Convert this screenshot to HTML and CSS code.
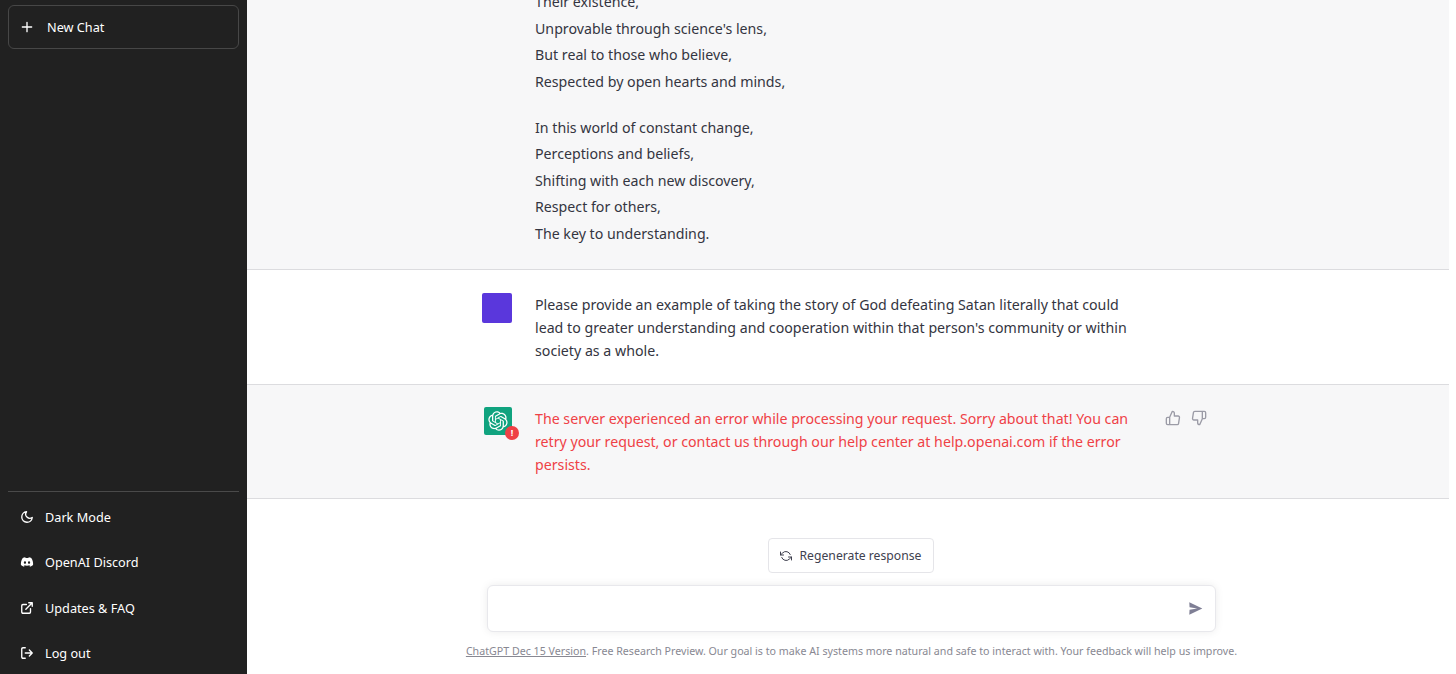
FILE: index.html
```html
<!DOCTYPE html>
<html lang="en">
<head>
  <meta charset="UTF-8" />
  <title>New chat</title>
  <link rel="stylesheet" href="styles.css">
</head>
<body>
  <aside class="sidebar">
    <a class="new-chat">
      <svg class="icon" viewBox="0 0 24 24"><path d="M12 4v16M4 12h16"/></svg>
      New Chat
    </a>
    <div class="side-bottom">
      <a class="side-link">
        <svg class="icon" viewBox="0 0 24 24"><path d="M21 12.79A9 9 0 1 1 11.21 3 7 7 0 0 0 21 12.79z"/></svg>
        Dark Mode
      </a>
      <a class="side-link">
        <svg class="icon" viewBox="0 0 24 24"><path class="fill" d="M19.3 5.3A17 17 0 0 0 15 4l-.6 1.2a16 16 0 0 0-4.800 0L9 4a17 17 0 0 0-4.300 1.300C2 9.400 1.200 13.400 1.600 17.300A17 17 0 0 0 6.900 20l1.100-1.800-1.700-.8.400-.3a12 12 0 0 0 10.600 0l.4.300-1.700.8 1.100 1.800a17 17 0 0 0 5.300-2.700c.5-4.500-.8-8.500-3.100-12zM8.500 15c-1 0-1.900-1-1.900-2.200s.8-2.200 1.900-2.200 1.900 1 1.900 2.200-.8 2.200-1.900 2.200zm7 0c-1 0-1.900-1-1.900-2.200s.8-2.200 1.900-2.200 1.900 1 1.900 2.200-.8 2.200-1.900 2.200z"/></svg>
        OpenAI Discord
      </a>
      <a class="side-link">
        <svg class="icon" viewBox="0 0 24 24"><path d="M18 13v6a2 2 0 0 1-2 2H5a2 2 0 0 1-2-2V8a2 2 0 0 1 2-2h6M15 3h6v6M10 14L21 3"/></svg>
        Updates &amp; FAQ
      </a>
      <a class="side-link">
        <svg class="icon" viewBox="0 0 24 24"><path d="M9 21H5a2 2 0 0 1-2-2V5a2 2 0 0 1 2-2h4M16 17l5-5-5-5M21 12H9"/></svg>
        Log out
      </a>
    </div>
  </aside>

  <main class="main">
    <section class="msg msg-grey msg-poem">
      <div class="msg-inner">
        <div class="avatar-space"></div>
        <div class="msg-text">
          <p>Their existence,<br>Unprovable through science's lens,<br>But real to those who believe,<br>Respected by open hearts and minds,</p>
          <p>In this world of constant change,<br>Perceptions and beliefs,<br>Shifting with each new discovery,<br>Respect for others,<br>The key to understanding.</p>
        </div>
      </div>
    </section>

    <section class="msg">
      <div class="msg-inner">
        <div class="avatar-space"><div class="avatar-user"></div></div>
        <div class="msg-text">Please provide an example of taking the story of God defeating Satan literally that could lead to greater understanding and cooperation within that person's community or within society as a whole.</div>
      </div>
    </section>

    <section class="msg msg-grey">
      <div class="msg-inner msg-inner-bot">
        <div class="avatar-space">
          <div class="avatar-bot">
            <svg viewBox="0 0 41 41"><path d="M37.5324 16.8707C37.9808 15.5241 38.1363 14.0974 37.9886 12.6859C37.8409 11.2744 37.3934 9.91076 36.676 8.68622C35.6126 6.83404 33.9882 5.3676 32.0373 4.4985C30.0864 3.62941 27.9098 3.40259 25.8215 3.85078C24.8796 2.7893 23.7219 1.94125 22.4257 1.36341C21.1295 0.785575 19.7249 0.491269 18.3058 0.500197C16.1708 0.495044 14.0893 1.16803 12.3614 2.42214C10.6335 3.67624 9.34853 5.44666 8.6917 7.47815C7.30085 7.76286 5.98686 8.3414 4.8377 9.17505C3.68854 10.0087 2.73073 11.0782 2.02839 12.312C0.956464 14.1591 0.498905 16.2988 0.721698 18.4228C0.944492 20.5467 1.83612 22.5449 3.268 24.1293C2.81966 25.4759 2.66413 26.9026 2.81182 28.3141C2.95951 29.7256 3.40701 31.0892 4.12437 32.3138C5.18791 34.1659 6.8123 35.6322 8.76321 36.5013C10.7141 37.3704 12.8907 37.5973 14.9789 37.1492C15.9208 38.2107 17.0786 39.0587 18.3747 39.6366C19.6709 40.2144 21.0755 40.5087 22.4946 40.4998C24.6307 40.5054 26.7133 39.8321 28.4418 38.5772C30.1704 37.3223 31.4556 35.5506 32.1119 33.5179C33.5027 33.2332 34.8167 32.6547 35.9659 31.821C37.115 30.9874 38.0728 29.9178 38.7752 28.684C39.8458 26.8371 40.3023 24.6979 40.0789 22.5748C39.8556 20.4517 38.9639 18.4544 37.5324 16.8707ZM22.4978 37.8849C20.7443 37.8874 19.0459 37.2733 17.6994 36.1501C17.7601 36.117 17.8666 36.0586 17.936 36.0161L25.9004 31.4156C26.1003 31.3019 26.2663 31.137 26.3813 30.9378C26.4964 30.7386 26.5563 30.5124 26.5549 30.2825V19.0542L29.9213 20.998C29.9389 21.0068 29.9541 21.0198 29.9656 21.0359C29.977 21.052 29.9842 21.0707 29.9867 21.0902V30.3889C29.9842 32.375 29.1946 34.2791 27.7909 35.6841C26.3872 37.0892 24.4838 37.8806 22.4978 37.8849ZM6.39227 31.0064C5.51397 29.4888 5.19742 27.7107 5.49804 25.9832C5.55718 26.0187 5.66048 26.0818 5.73461 26.1244L13.699 30.7248C13.8975 30.8408 14.1233 30.902 14.3532 30.902C14.583 30.902 14.8088 30.8408 15.0073 30.7248L24.731 25.1103V28.9979C24.7321 29.0177 24.7283 29.0376 24.7199 29.0556C24.7115 29.0736 24.6988 29.0893 24.6829 29.1012L16.6317 33.7497C14.9096 34.7416 12.8643 35.0097 10.9447 34.4954C9.02506 33.9811 7.38785 32.7263 6.39227 31.0064ZM4.29707 13.6194C5.17156 12.0998 6.55279 10.9364 8.19885 10.3327C8.19885 10.4013 8.19491 10.5228 8.19491 10.6071V19.808C8.19351 20.0378 8.25334 20.2638 8.36823 20.4629C8.48312 20.6619 8.64893 20.8267 8.84863 20.9404L18.5723 26.5542L15.206 28.4979C15.1894 28.5089 15.1703 28.5155 15.1505 28.5173C15.1307 28.5191 15.1107 28.516 15.0924 28.5082L7.04046 23.8557C5.32135 22.8601 4.06716 21.2235 3.55289 19.3046C3.03862 17.3858 3.30624 15.3413 4.29707 13.6194ZM31.955 20.0556L22.2312 14.4411L25.5976 12.4981C25.6142 12.4872 25.6333 12.4805 25.6531 12.4787C25.6729 12.4769 25.6928 12.4801 25.7111 12.4879L33.7631 17.1364C34.9967 17.849 36.0017 18.8982 36.6606 20.1613C37.3194 21.4244 37.6047 22.849 37.4832 24.2684C37.3617 25.6878 36.8382 27.0432 35.9743 28.1759C35.1103 29.3086 33.9415 30.1717 32.6047 30.6641C32.6047 30.5947 32.6047 30.4733 32.6047 30.3889V21.188C32.6066 20.9586 32.5474 20.7328 32.4332 20.5338C32.319 20.3348 32.154 20.1698 31.955 20.0556ZM35.3055 15.0128C35.2464 14.9765 35.1431 14.9142 35.069 14.8717L27.1045 10.2712C26.906 10.1554 26.6803 10.0943 26.4504 10.0943C26.2206 10.0943 25.9948 10.1554 25.7963 10.2712L16.0726 15.8858V11.9982C16.0715 11.9783 16.0753 11.9585 16.0837 11.9405C16.0921 11.9225 16.1048 11.9068 16.1207 11.8949L24.1719 7.25025C25.4053 6.53903 26.8158 6.19376 28.2383 6.25482C29.6608 6.31589 31.0364 6.78077 32.2044 7.59508C33.3723 8.40939 34.2842 9.53945 34.8334 10.8531C35.3826 12.1667 35.5464 13.6095 35.3055 15.0128ZM14.2424 21.9419L10.8752 19.9981C10.8576 19.9893 10.8423 19.9763 10.8309 19.9602C10.8195 19.9441 10.8122 19.9254 10.8098 19.9058V10.6071C10.8107 9.18295 11.2173 7.78848 11.9819 6.58696C12.7466 5.38544 13.8377 4.42659 15.1275 3.82264C16.4173 3.21869 17.8524 2.99464 19.2649 3.1767C20.6775 3.35876 22.0089 3.93941 23.1034 4.85067C23.0427 4.88379 22.937 4.94215 22.8668 4.98473L14.9024 9.58517C14.7025 9.69878 14.5366 9.86356 14.4215 10.0626C14.3065 10.2616 14.2466 10.4877 14.2479 10.7175L14.2424 21.9419ZM16.071 17.9991L20.4018 15.4978L24.7325 17.9975V22.9985L20.4018 25.4983L16.071 22.9985V17.9991Z"/></svg>
            <span class="error-badge">!</span>
          </div>
        </div>
        <div class="msg-text msg-error">The server experienced an error while processing your request. Sorry about that! You can retry your request, or contact us through our help center at help.openai.com if the error persists.</div>
        <div class="thumbs">
          <svg viewBox="0 0 24 24"><path d="M14 9V5a3 3 0 0 0-3-3l-4 9v11h11.300a2 2 0 0 0 2-1.700l1.400-9A2 2 0 0 0 19.700 9H14zM7 22H4a2 2 0 0 1-2-2v-7a2 2 0 0 1 2-2h3"/></svg>
          <svg viewBox="0 0 24 24"><path d="M10 15v4a3 3 0 0 0 3 3l4-9V2H5.700a2 2 0 0 0-2 1.700l-1.400 9a2 2 0 0 0 2 2.300H10zM17 2h3a2 2 0 0 1 2 2v7a2 2 0 0 1-2 2h-3"/></svg>
        </div>
      </div>
    </section>

    <div class="composer">
      <button class="regen">
        <svg viewBox="0 0 24 24"><path d="M1 4v6h6M23 20v-6h-6"/><path d="M20.500 9A9 9 0 0 0 5.600 5.600L1 10m22 4l-4.600 4.400A9 9 0 0 1 3.500 15"/></svg>
        Regenerate response
      </button>
      <div class="input-box">
        <svg viewBox="0 0 20 20"><path d="M2.700 17.300L18 10 2.700 2.700 3 8.600 12 10l-9 1.400z"/></svg>
      </div>
      <div class="footnote"><u>ChatGPT Dec 15 Version</u>. Free Research Preview. Our goal is to make AI systems more natural and safe to interact with. Your feedback will help us improve.</div>
    </div>
  </main>
</body>
</html>
```

FILE: styles.css
```css
* {
  box-sizing: border-box;
}

html, body {
  height: 100%;
}

body {
  margin: 0;
  display: flex;
  overflow: hidden;
  background: #fff;
  font-family: "Noto Sans", "Open Sans", sans-serif;
  color: #343541;
}

.sidebar {
  width: 247px;
  flex: none;
  height: 674px;
  background: #212121;
  padding: 5px 8px 0;
  display: flex;
  flex-direction: column;
  color: #fff;
  font-size: 12.7px;
}

.icon {
  width: 14px;
  height: 14px;
  flex: none;
  fill: none;
  stroke: #fff;
  stroke-width: 2.3;
  stroke-linecap: round;
  stroke-linejoin: round;
}

.icon .fill {
  fill: #fff;
  stroke: none;
}

.new-chat {
  height: 44px;
  display: flex;
  align-items: center;
  gap: 13px;
  padding-left: 11px;
  border: 1px solid #474747;
  border-radius: 6px;
}

.side-bottom {
  margin-top: auto;
  margin-bottom: -2px;
  border-top: 1px solid #4a4a4a;
  padding-top: 2.5px;
}

.side-link {
  height: 45.5px;
  display: flex;
  align-items: center;
  gap: 11px;
  padding-left: 12px;
}

.main {
  flex: 1;
  min-width: 0;
  height: 674px;
  display: flex;
  flex-direction: column;
  overflow: hidden;
}

.msg {
  flex: none;
  margin-right: 7px;
  border-bottom: 1px solid #dcdcdf;
}

.msg-grey {
  background: #f7f7f8;
}

.msg-poem {
  height: 270px;
  display: flex;
  align-items: flex-end;
}

.msg-inner {
  width: 768px;
  margin-left: 234px;
  padding: 23px 0 22px;
  display: flex;
  position: relative;
}

.msg-inner-bot {
  padding: 22px 0;
}

.msg-poem .msg-inner {
  padding: 0 0 22px;
}

.avatar-space {
  width: 54px;
  flex: none;
}

.avatar-user {
  width: 30px;
  height: 30px;
  margin-left: 1px;
  background: #5a37dc;
  border-radius: 2px;
}

.avatar-bot {
  width: 28px;
  height: 28px;
  margin-left: 3px;
  background: #10a37f;
  border-radius: 2px;
  position: relative;
  padding: 4px;
}

.avatar-bot svg {
  display: block;
  width: 20px;
  height: 20px;
  fill: #fff;
}

.error-badge {
  position: absolute;
  right: -7px;
  bottom: -5px;
  width: 14px;
  height: 14px;
  border-radius: 50%;
  background: #ef4146;
  color: #fff;
  font-size: 9px;
  font-weight: 700;
  line-height: 14px;
  text-align: center;
}

.msg-text {
  width: 596px;
  flex: none;
  font-size: 14.2px;
  line-height: 23px;
}

.msg-text p {
  margin: 0 0 19.5px;
  line-height: 26.5px;
}

.msg-text p:last-child {
  margin-bottom: 0;
}

.msg-error {
  color: #ef4146;
}

.thumbs {
  position: absolute;
  top: 25px;
  left: 684px;
  display: flex;
  gap: 10px;
}

.thumbs svg {
  width: 16px;
  height: 16px;
  fill: none;
  stroke: #9b9ba6;
  stroke-width: 2;
  stroke-linejoin: round;
}

.composer {
  flex: 1;
  display: flex;
  flex-direction: column;
  align-items: center;
  padding-top: 39px;
}

.regen {
  height: 35px;
  width: 166px;
  flex: none;
  margin-right: 2px;
  display: flex;
  align-items: center;
  justify-content: center;
  gap: 8px;
  padding: 0;
  background: #fff;
  border: 1px solid #e5e5e9;
  border-radius: 4px;
  font: inherit;
  font-size: 12.2px;
  color: #40414f;
}

.regen svg {
  width: 12px;
  height: 12px;
  fill: none;
  stroke: #40414f;
  stroke-width: 2;
  stroke-linecap: round;
  stroke-linejoin: round;
}

.input-box {
  width: 729px;
  height: 47px;
  flex: none;
  margin-top: 12px;
  background: #fff;
  border: 1px solid #e8e8ec;
  border-radius: 6px;
  box-shadow: 0 0 8px rgba(0, 0, 0, 0.08);
  display: flex;
  align-items: center;
  justify-content: flex-end;
  padding-right: 11px;
}

.input-box svg {
  width: 17px;
  height: 17px;
  fill: #7f7f95;
}

.footnote {
  margin-top: 11px;
  font-size: 10.67px;
  line-height: 16px;
  color: #888892;
  white-space: nowrap;
}
```
